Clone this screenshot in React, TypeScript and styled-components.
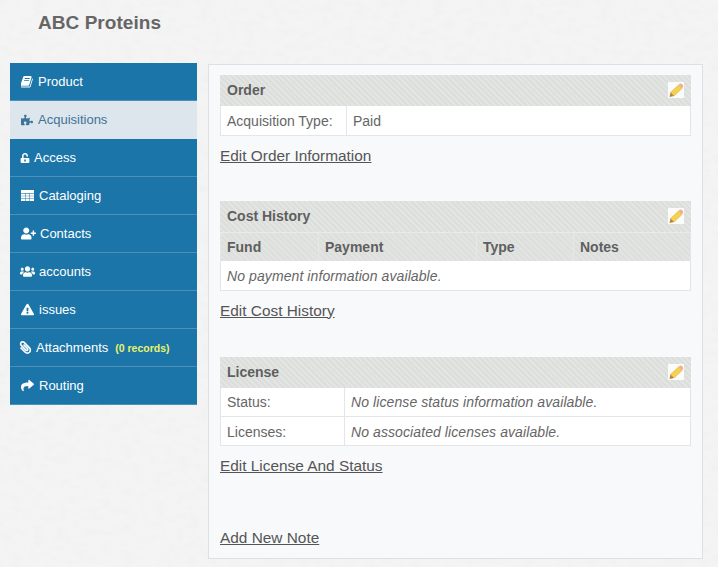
import React from "react";
import styled, { createGlobalStyle } from "styled-components";
import {
  FaPuzzlePiece,
  FaUnlockAlt,
  FaUserPlus,
  FaUsers,
  FaExclamationTriangle,
  FaPaperclip,
  FaShare,
} from "react-icons/fa";

const paper = encodeURIComponent(
  `<svg xmlns="http://www.w3.org/2000/svg" width="400" height="400"><filter id="n"><feTurbulence type="fractalNoise" baseFrequency="0.09 0.14" numOctaves="3" seed="4"/><feColorMatrix values="0 0 0 0 0.8 0 0 0 0 0.8 0 0 0 0 0.8 0.5 0 0 0 -0.19"/></filter><rect width="400" height="400" fill="#f4f4f4"/><rect width="400" height="400" filter="url(#n)"/></svg>`
);

const GlobalStyle = createGlobalStyle`
  html, body {
    margin: 0;
    padding: 0;
    background: #f3f3f3 url("data:image/svg+xml,${paper}");
    color: #5f5f5f;
    font-family: "Liberation Sans", Arial, sans-serif;
    font-size: 14px;
  }
`;

const stripes = `repeating-linear-gradient(45deg, #dcdedc 0, #dcdedc 2px, #e3e5e3 2px, #e3e5e3 4px)`;

const Page = styled.div`
  width: 718px;
  height: 567px;
  overflow: hidden;
  box-sizing: border-box;
  padding: 12px 15px 0 10px;
`;

const Title = styled.h1`
  margin: 0 0 29px 28px;
  font-size: 19px;
  line-height: 22px;
  font-weight: bold;
  letter-spacing: 0.05px;
  color: #666666;
`;

const Columns = styled.div`
  display: flex;
  align-items: flex-start;
  gap: 11px;
`;

const Sidebar = styled.ul`
  list-style: none;
  margin: 0;
  padding: 0;
  width: 187px;
  flex: none;
  background: #1b75a9;
`;

const NavItem = styled.li<{ $active?: boolean }>`
  display: flex;
  align-items: center;
  box-sizing: border-box;
  height: 38px;
  padding-left: 11px;
  font-size: 13px;
  color: ${(p) => (p.$active ? "#3f7399" : "#ffffff")};
  background: ${(p) => (p.$active ? "#dce6ec" : "transparent")};
  border-bottom: 1px solid ${(p) => (p.$active ? "#dce6ec" : "#4b90b9")};
`;

const IconSlot = styled.span<{ $width: number; $size: number; $flip?: boolean }>`
  display: flex;
  flex: none;
  justify-content: center;
  width: ${(p) => p.$width}px;
  margin-right: 5px;
  font-size: ${(p) => p.$size}px;
  transform: ${(p) => (p.$flip ? "scaleX(-1)" : "none")};
  svg {
    flex: none;
    width: 1em;
    height: 1em;
  }
`;

const Count = styled.span`
  margin-left: 7px;
  font-size: 10.5px;
  font-weight: bold;
  color: #e9f26a;
`;

const Panel = styled.main`
  flex: 1;
  box-sizing: border-box;
  height: 495px;
  margin-top: 1px;
  padding: 10px 11px 0;
  background: #f8f9fb;
  border: 1px solid #dfe0e2;
`;

const Block = styled.section<{ $gap: number }>`
  margin-bottom: ${(p) => p.$gap}px;
`;

const BlockHeader = styled.div`
  display: flex;
  align-items: center;
  justify-content: space-between;
  box-sizing: border-box;
  height: 31px;
  padding: 0 7px 1px 7px;
  background: ${stripes};
  font-weight: bold;
  color: #5f5f5f;
`;

const Table = styled.table`
  width: 100%;
  border-collapse: collapse;
  table-layout: fixed;
  background: #ffffff;
  border: 1px solid #e3e5e7;
  border-top: 0;
`;

const Cell = styled.td<{ $italic?: boolean }>`
  box-sizing: border-box;
  height: 29px;
  padding: 1px 6px 0;
  border: 1px solid #e3e5e7;
  border-top: 0;
  font-style: ${(p) => (p.$italic ? "italic" : "normal")};
  letter-spacing: ${(p) => (p.$italic ? "0.09px" : "0")};
  color: #666666;
`;

const HeadCell = styled.th`
  box-sizing: border-box;
  height: 29px;
  padding: 0 6px;
  text-align: left;
  font-weight: bold;
  color: #5f5f5f;
  background: ${stripes};
  border-left: 1px solid #e6e8e6;
  border-top: 1px solid #e9ebe9;
  &:first-child {
    border-left: 0;
  }
`;

const EditLink = styled.a`
  display: inline-block;
  margin-top: 11px;
  font-size: 15.4px;
  line-height: 18px;
  color: #555555;
  text-decoration: underline;
`;

const PencilBox = styled.span`
  display: flex;
  width: 16px;
  height: 16px;
  background: #fbfbfb;
`;

function Pencil() {
  return (
    <PencilBox>
      <svg width="16" height="16" viewBox="0 0 16 16">
        <path d="M2.5 10.5 L10.5 3 L14 6.5 L6 14 Z" fill="#f3d24f" stroke="#e0b040" strokeWidth="0.6" />
        <path d="M10.5 3 L12 1.5 Q13 1 14.5 2.5 Q15.5 3.5 15 5 L14 6.5 Z" fill="#eeb28a" />
        <path d="M2.5 10.5 L6 14 L1.5 15 Z" fill="#b9813e" />
      </svg>
    </PencilBox>
  );
}

function BookIcon() {
  return (
    <svg viewBox="96 120 1600 1600" fill="currentColor">
      <path d="M1639 478q40 57 18 129l-275 906q-19 64-76.5 107.5t-122.5 43.5h-923q-77 0-148.5-53.5t-99.5-131.5q-24-67-2-127 0-4 3-27t4-37q1-8-3-21.5t-3-19.5q2-11 8-21t16.5-23.5 16.5-23.5q23-38 45-91.5t30-91.5q3-10 .5-30t-.5-28q3-11 17-28t17-23q21-36 42-92t25-90q1-9-2.5-32t.5-28q4-13 22-30.5t22-22.5q19-26 42.5-84.5t27.5-96.5q1-8-3-25.5t-2-26.5q2-8 9-18t18-23 17-21q8-12 16.5-30.5t15-35 16-36 19.5-32 26.5-23.5 36-11.5 47.5 5.5l-1 3q38-9 51-9h761q74 0 114 56t18 130l-274 906q-36 119-71.5 153.5t-128.5 34.5h-869q-27 0-38 15-11 16-1 43 24 70 144 70h923q29 0 56-15.5t35-41.5l300-987q7-22 5-57 38 15 59 43zm-1064 2q-4 13 2 22.5t20 9.5h608q13 0 25.5-9.5t16.5-22.5l21-64q4-13-2-22.5t-20-9.5h-608q-13 0-25.5 9.5t-16.5 22.5zm-83 256q-4 13 2 22.5t20 9.5h608q13 0 25.5-9.5t16.5-22.5l21-64q4-13-2-22.5t-20-9.5h-608q-13 0-25.5 9.5t-16.5 22.5z" />
    </svg>
  );
}

function TableIcon() {
  return (
    <svg viewBox="0 0 13 13" fill="currentColor">
      <rect x="0" y="1" width="13" height="3" />
      {[4.6, 7.2, 9.8].map((y) => (
        <g key={y}>
          <rect x="0" y={y} width="4" height="2.2" />
          <rect x="4.5" y={y} width="4" height="2.2" />
          <rect x="9" y={y} width="4" height="2.2" />
        </g>
      ))}
    </svg>
  );
}

const navItems = [
  { label: "Product", icon: <BookIcon />, width: 12, size: 12 },
  { label: "Acquisitions", icon: <FaPuzzlePiece />, width: 12, size: 12, active: true },
  { label: "Access", icon: <FaUnlockAlt />, width: 8, size: 10 },
  { label: "Cataloging", icon: <TableIcon />, width: 13, size: 13 },
  { label: "Contacts", icon: <FaUserPlus />, width: 14, size: 15 },
  { label: "accounts", icon: <FaUsers />, width: 13, size: 15 },
  { label: "issues", icon: <FaExclamationTriangle />, width: 13, size: 13 },
  { label: "Attachments", icon: <FaPaperclip />, width: 10, size: 13, flip: true, count: "(0 records)" },
  { label: "Routing", icon: <FaShare />, width: 13, size: 13 },
];

export default function App() {
  return (
    <Page>
      <GlobalStyle />
      <Title>ABC Proteins</Title>
      <Columns>
        <Sidebar>
          {navItems.map((item) => (
            <NavItem key={item.label} $active={item.active}>
              <IconSlot $width={item.width} $size={item.size} $flip={item.flip}>
                {item.icon}
              </IconSlot>
              {item.label}
              {item.count && <Count>{item.count}</Count>}
            </NavItem>
          ))}
        </Sidebar>
        <Panel>
          <Block $gap={36}>
            <BlockHeader>
              Order
              <Pencil />
            </BlockHeader>
            <Table>
              <colgroup>
                <col width="126" />
                <col />
              </colgroup>
              <tbody>
                <tr>
                  <Cell>Acquisition Type:</Cell>
                  <Cell>Paid</Cell>
                </tr>
              </tbody>
            </Table>
            <EditLink>Edit Order Information</EditLink>
          </Block>
          <Block $gap={37}>
            <BlockHeader>
              Cost History
              <Pencil />
            </BlockHeader>
            <Table>
              <colgroup>
                <col width="98" />
                <col width="158" />
                <col width="97" />
                <col />
              </colgroup>
              <thead>
                <tr>
                  <HeadCell>Fund</HeadCell>
                  <HeadCell>Payment</HeadCell>
                  <HeadCell>Type</HeadCell>
                  <HeadCell>Notes</HeadCell>
                </tr>
              </thead>
              <tbody>
                <tr>
                  <Cell $italic colSpan={4}>
                    No payment information available.
                  </Cell>
                </tr>
              </tbody>
            </Table>
            <EditLink>Edit Cost History</EditLink>
          </Block>
          <Block $gap={43}>
            <BlockHeader>
              License
              <Pencil />
            </BlockHeader>
            <Table>
              <colgroup>
                <col width="124" />
                <col />
              </colgroup>
              <tbody>
                <tr>
                  <Cell>Status:</Cell>
                  <Cell $italic>No license status information available.</Cell>
                </tr>
                <tr>
                  <Cell>Licenses:</Cell>
                  <Cell $italic>No associated licenses available.</Cell>
                </tr>
              </tbody>
            </Table>
            <EditLink>Edit License And Status</EditLink>
          </Block>
          <EditLink>Add New Note</EditLink>
        </Panel>
      </Columns>
    </Page>
  );
}
